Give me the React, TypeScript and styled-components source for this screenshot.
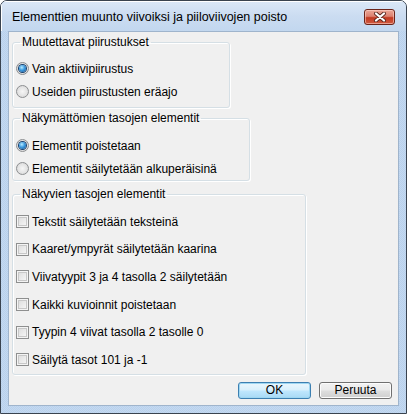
import styled, { createGlobalStyle } from "styled-components"

const GlobalStyle = createGlobalStyle`
    body {
        margin: 0;
        background: #ffffff;
        font-family: "Liberation Sans", Arial, sans-serif;
    }
`

const visibleLayerOptions = [
    "Tekstit säilytetään teksteinä",
    "Kaaret/ympyrät säilytetään kaarina",
    "Viivatyypit 3 ja 4 tasolla 2 säilytetään",
    "Kaikki kuvioinnit poistetaan",
    "Tyypin 4 viivat tasolla 2 tasolle 0",
    "Säilytä tasot 101 ja -1",
]

export default function App() {
    return (
        <>
            <GlobalStyle />
            <Window>
                <TitleBar>
                    <Title>Elementtien muunto viivoiksi ja piiloviivojen poisto</Title>
                    <CloseButton aria-label="close">
                        <svg width="14" height="10" viewBox="0 0 14 10">
                            <path d="M3 1.5 L11 8.5 M11 1.5 L3 8.5" stroke="#5a2a22" strokeWidth="4" strokeLinecap="round" />
                            <path d="M3 1.5 L11 8.5 M11 1.5 L3 8.5" stroke="#ffffff" strokeWidth="2.2" strokeLinecap="round" />
                        </svg>
                    </CloseButton>
                </TitleBar>
                <Client>
                    <Group $width={218} $top={3} $padTop={8} $padBottom={4}>
                        <Legend>Muutettavat piirustukset</Legend>
                        <Row $h={23}>
                            <Radio $checked />
                            Vain aktiivipiirustus
                        </Row>
                        <Row $h={23}>
                            <Radio />
                            Useiden piirustusten eräajo
                        </Row>
                    </Group>
                    <Group $width={238} $top={3} $padTop={9} $padBottom={0}>
                        <Legend>Näkymättömien tasojen elementit</Legend>
                        <Row $h={23}>
                            <Radio $checked />
                            Elementit poistetaan
                        </Row>
                        <Row $h={23}>
                            <Radio />
                            Elementit säilytetään alkuperäisinä
                        </Row>
                    </Group>
                    <Group $width={294} $top={6} $padTop={7} $padBottom={0}>
                        <Legend>Näkyvien tasojen elementit</Legend>
                        {visibleLayerOptions.map((label) => (
                            <Row key={label} $h={27.6}>
                                <Check />
                                {label}
                            </Row>
                        ))}
                    </Group>
                    <ButtonRow>
                        <Button $primary>OK</Button>
                        <Button>Peruuta</Button>
                    </ButtonRow>
                </Client>
            </Window>
        </>
    )
}

// the aero basic frame, light blue with a fine dither
const Window = styled.div`
    width: 407px;
    height: 414px;
    box-sizing: border-box;
    border: 1px solid #39434f;
    border-radius: 7px 7px 0 0;
    display: flex;
    flex-direction: column;
    background:
        repeating-conic-gradient(#c4d9f1 0 25%, #b9d1ec 0 50%) 0 0 / 2px 2px;
    overflow: hidden;
`

const TitleBar = styled.div`
    height: 30px;
    flex: none;
    display: flex;
    align-items: center;
    justify-content: space-between;
    padding: 0 11px 0 11px;
    background: linear-gradient(#dbe8f7 0%, #cbdcf1 50%, #c2d7ef 100%);
    box-shadow: inset 1px 1px 0 #ffffff;
`

const Title = styled.div`
    font-family: "Liberation Sans", Arial, sans-serif;
    font-size: 12.5px;
    color: #000000;
    padding-top: 2px;
`

const CloseButton = styled.div`
    width: 29px;
    height: 14px;
    margin-top: 1px;
    border: 1px solid #6b2419;
    border-radius: 3px;
    display: flex;
    align-items: center;
    justify-content: center;
    background: linear-gradient(#eca797 0%, #dc8170 45%, #c23a22 55%, #d05a40 100%);
    box-shadow: inset 0 0 0 1px rgba(255, 215, 205, 0.55);
`

const Client = styled.div`
    flex: 1;
    margin: 0 7px 7px 7px;
    border: 1px solid #9fb4cc;
    background: #f0f0f0;
    display: flex;
    flex-direction: column;
    align-items: flex-start;
    padding: 0 6px 0 3px;
`

const Group = styled.fieldset<{ $width: number; $top: number; $padTop: number; $padBottom: number }>`
    width: ${(p) => p.$width}px;
    box-sizing: border-box;
    margin: ${(p) => p.$top}px 0 0 0;
    padding: ${(p) => p.$padTop}px 0 ${(p) => p.$padBottom}px 3px;
    border: 1px solid #d5dfe5;
    border-radius: 3px;
    box-shadow: inset 1px 1px 0 #ffffff, 1px 1px 0 #ffffff;
    min-width: 0;
`

const Legend = styled.legend`
    font-size: 12px;
    line-height: 14px;
    padding: 0 2px;
    margin-left: 4px;
    color: #000000;
`

const Row = styled.label<{ $h: number }>`
    height: ${(p) => p.$h}px;
    display: flex;
    align-items: center;
    gap: 3px;
    font-size: 12px;
    color: #000000;
    white-space: nowrap;
`

const Radio = styled.span<{ $checked?: boolean }>`
    width: 13px;
    height: 13px;
    box-sizing: border-box;
    flex: none;
    border-radius: 50%;
    border: 1px solid #8c8e90;
    background: radial-gradient(circle at 50% 50%, #f6f6f6 0%, #e2e2e2 60%, #d0d0d0 100%);
    display: flex;
    align-items: center;
    justify-content: center;

    &::after {
        content: "";
        display: ${(p) => (p.$checked ? "block" : "none")};
        width: 7px;
        height: 7px;
        border-radius: 50%;
        background: radial-gradient(circle at 40% 35%, #b9ecff 0%, #3d9be0 45%, #0f4f8f 100%);
        box-shadow: 0 0 0 1px #18406e;
    }
`

const Check = styled.span`
    width: 13px;
    height: 13px;
    box-sizing: border-box;
    flex: none;
    border: 1px solid #8e8f8f;
    background: linear-gradient(135deg, #d9d9d9 0%, #ededed 60%, #fbfbfb 100%);
    box-shadow: inset 0 0 0 1px #f4f4f4, inset 0 0 0 2px #c8c8c8;
`

const ButtonRow = styled.div`
    align-self: flex-end;
    display: flex;
    gap: 8px;
    margin-top: 7px;
`

const Button = styled.button<{ $primary?: boolean }>`
    width: 73px;
    height: 17px;
    box-sizing: border-box;
    padding: 0;
    font-family: "Liberation Sans", Arial, sans-serif;
    font-size: 12px;
    line-height: 14px;
    color: #000000;
    border-radius: 3px;
    border: 1px solid ${(p) => (p.$primary ? "#3c7fb1" : "#707070")};
    background: ${(p) =>
        p.$primary
            ? "linear-gradient(#eaf6fd 0%, #d9f0fc 45%, #bee6fd 55%, #a7d9f5 100%)"
            : "linear-gradient(#f2f2f2 0%, #ebebeb 45%, #dddddd 55%, #cfcfcf 100%)"};
    box-shadow: inset 0 0 0 1px ${(p) => (p.$primary ? "#9fd7f2" : "#fcfcfc")};
`
